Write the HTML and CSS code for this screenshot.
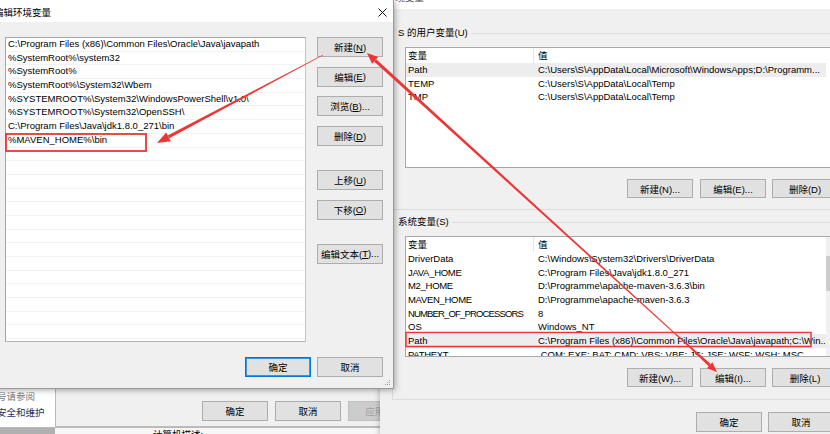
FILE: index.html
```html
<!DOCTYPE html>
<html lang="zh-CN">
<head>
<meta charset="utf-8">
<title>编辑环境变量</title>
<link rel="stylesheet" href="styles.css">
</head>
<body>
<div class="desktop">

  <div class="win cp">
    <div class="cp-links">
      <div class="cp-see">号请参阅</div>
      <div class="cp-link">安全和维护</div>
    </div>
    <div class="cp-bottom"><span class="cp-desc">计算机描述:</span></div>
  </div>

  <div class="win sysprops">
    <div class="sp-buttons">
      <div class="btn">确定</div>
      <div class="btn">取消</div>
      <div class="btn disabled">应用(A)</div>
    </div>
  </div>

  <div class="win envdlg">
    <div class="env-title">环境变量</div>
    <div class="env-body">
      <div class="grp grp-user">
        <div class="grp-head"><span class="grp-label">S 的用户变量(U)</span><span class="rule"></span></div>
        <div class="vlist">
          <div class="vrows">
            <div class="vhead"><span class="c1">变量</span><span class="c2">值</span></div>
            <div class="vrow sel"><span class="c1">Path</span><span class="c2">C:\Users\S\AppData\Local\Microsoft\WindowsApps;D:\Programm...</span></div>
            <div class="vrow"><span class="c1">TEMP</span><span class="c2">C:\Users\S\AppData\Local\Temp</span></div>
            <div class="vrow"><span class="c1">TMP</span><span class="c2">C:\Users\S\AppData\Local\Temp</span></div>
          </div>
        </div>
        <div class="btnrow">
          <div class="btn sm">新建(N)...</div>
          <div class="btn sm">编辑(E)...</div>
          <div class="btn sm">删除(D)</div>
        </div>
      </div>

      <div class="grp grp-sys">
        <div class="grp-head"><span class="grp-label">系统变量(S)</span><span class="rule"></span></div>
        <div class="vlist">
          <div class="vrows">
            <div class="vhead"><span class="c1">变量</span><span class="c2">值</span></div>
            <div class="vrow"><span class="c1">DriverData</span><span class="c2">C:\Windows\System32\Drivers\DriverData</span></div>
            <div class="vrow"><span class="c1 caps">JAVA_HOME</span><span class="c2">C:\Program Files\Java\jdk1.8.0_271</span></div>
            <div class="vrow"><span class="c1 caps">M2_HOME</span><span class="c2">D:\Programme\apache-maven-3.6.3\bin</span></div>
            <div class="vrow"><span class="c1 caps">MAVEN_HOME</span><span class="c2">D:\Programme\apache-maven-3.6.3</span></div>
            <div class="vrow"><span class="c1 cond">NUMBER_OF_PROCESSORS</span><span class="c2">8</span></div>
            <div class="vrow"><span class="c1">OS</span><span class="c2">Windows_NT</span></div>
            <div class="vrow sel"><span class="c1">Path</span><span class="c2">C:\Program Files (x86)\Common Files\Oracle\Java\javapath;C:\Win...</span></div>
            <div class="vrow"><span class="c1 caps">PATHEXT</span><span class="c2">.COM;.EXE;.BAT;.CMD;.VBS;.VBE;.JS;.JSE;.WSF;.WSH;.MSC</span></div>
          </div>
          <div class="vscroll"><div class="thumb"></div></div>
        </div>
        <div class="btnrow">
          <div class="btn sm">新建(W)...</div>
          <div class="btn sm">编辑(I)...</div>
          <div class="btn sm">删除(L)</div>
        </div>
      </div>

      <div class="env-foot">
        <div class="btn">确定</div>
        <div class="btn">取消</div>
      </div>
    </div>
  </div>

  <div class="win editdlg">
    <div class="ed-title">
      <span>编辑环境变量</span>
      <svg class="close" width="9" height="9" viewBox="0 0 9 9"><path d="M0.5 0.5 L8.5 8.5 M8.5 0.5 L0.5 8.5" stroke="#111" stroke-width="1" fill="none"/></svg>
    </div>
    <div class="ed-body">
      <div class="plist">
        <div class="prow">C:\Program Files (x86)\Common Files\Oracle\Java\javapath</div>
        <div class="prow">%SystemRoot%\system32</div>
        <div class="prow">%SystemRoot%</div>
        <div class="prow">%SystemRoot%\System32\Wbem</div>
        <div class="prow">%SYSTEMROOT%\System32\WindowsPowerShell\v1.0\</div>
        <div class="prow">%SYSTEMROOT%\System32\OpenSSH\</div>
        <div class="prow">C:\Program Files\Java\jdk1.8.0_271\bin</div>
        <div class="prow">%MAVEN_HOME%\bin</div>
        <div class="prow"></div><div class="prow"></div><div class="prow"></div><div class="prow"></div>
        <div class="prow"></div><div class="prow"></div><div class="prow"></div><div class="prow"></div>
        <div class="prow"></div><div class="prow"></div><div class="prow"></div><div class="prow"></div>
        <div class="prow"></div><div class="prow"></div>
      </div>
      <div class="side">
        <div class="btn">新建(<u>N</u>)</div>
        <div class="btn">编辑(<u>E</u>)</div>
        <div class="btn">浏览(<u>B</u>)...</div>
        <div class="btn">删除(<u>D</u>)</div>
        <div class="btn gap">上移(<u>U</u>)</div>
        <div class="btn">下移(<u>O</u>)</div>
        <div class="btn gap">编辑文本(<u>T</u>)...</div>
      </div>
      <div class="ed-foot">
        <div class="btn default">确定</div>
        <div class="btn">取消</div>
      </div>
    </div>
    <svg class="grip" width="7" height="7" viewBox="0 0 7 7">
      <rect x="5" y="1" width="1" height="1" fill="#999"/>
      <rect x="3" y="3" width="1" height="1" fill="#999"/><rect x="5" y="3" width="1" height="1" fill="#999"/>
      <rect x="1" y="5" width="1" height="1" fill="#999"/><rect x="3" y="5" width="1" height="1" fill="#999"/><rect x="5" y="5" width="1" height="1" fill="#999"/>
    </svg>
  </div>

  <svg class="annot" width="830" height="434" viewBox="0 0 830 434">
    <g fill="#ee3535">
      <polygon points="716.27,370.70 376.21,59.23 374.05,61.59 715.73,371.30"/>
      <polygon points="367,53 378.16,57.08 372.10,63.74"/>
      <polygon points="675.73,334.29 708.65,366.30 710.69,364.10 676.27,333.71"/>
      <polygon points="717,372 706.95,368.13 712.39,362.27"/>
      <polygon points="322.86,54.73 167.74,135.50 169.24,138.32 323.14,55.27"/>
      <polygon points="157,143 166.15,132.49 170.83,141.33"/>
    </g>
    <rect x="6" y="134" width="140" height="17" fill="none" stroke="#ee3535" stroke-width="1.8"/>
    <rect x="406" y="332.5" width="405" height="14" fill="none" stroke="#ee3535" stroke-width="1.5"/>
  </svg>
</div>
</body>
</html>
```

FILE: styles.css
```css
* { box-sizing: border-box; }

body {
  margin: 0;
  font-family: "Liberation Sans", "Noto Sans CJK SC", sans-serif;
  font-size: 9.5px;
  color: #000;
}

.desktop {
  position: relative;
  width: 830px;
  height: 434px;
  overflow: hidden;
  background: #fff;
}

.win { position: absolute; }

/* control panel in the far back */
.cp {
  left: 0; top: 0;
  width: 830px; height: 434px;
  background: #fff;
  display: flex;
  flex-direction: column;
}
.cp-links { padding-top: 389px; margin-left: -3px; line-height: 16px; }
.cp-see { color: #7a7a7a; }
.cp-link { color: #1f2d5c; }
.cp-bottom {
  margin-top: auto;
  height: 7px;
  border-top: 1px solid #b8b8b8;
  background: linear-gradient(to right, #b0b0b0 0 55px, #f7f7f7 55px);
  padding-left: 153px;
  line-height: 13px;
  overflow: hidden;
}

/* system properties dialog (behind) */
.sysprops {
  left: 55px; top: 0;
  width: 330px; height: 427px;
  background: #f0f0f0;
  border: 1px solid #bcbcbc;
  overflow: hidden;
  display: flex;
  flex-direction: column;
  justify-content: flex-end;
  padding: 0 0 5px 146px;
}
.sp-buttons { display: flex; gap: 7px; }

/* buttons */
.btn {
  flex: none;
  width: 66px;
  height: 20px;
  background: #e1e1e1;
  border: 1px solid #adadad;
  display: flex;
  align-items: center;
  justify-content: center;
  white-space: nowrap;
}
.btn.sm { height: 19px; }
.btn.disabled { background: #cccccc; border-color: #bfbfbf; color: #a0a0a0; }
.btn.default { border-color: #0078d7; box-shadow: inset 0 0 0 1px #3d95dd; }
.btn u { text-decoration-thickness: 1px; text-underline-offset: 1px; }

/* environment variables dialog */
.envdlg {
  left: 380px; top: -20px;
  width: 470px; height: 470px;
  background: #f0f0f0;
  box-shadow: 0 0 6px rgba(0,0,0,0.3);
}
.env-title {
  height: 29px;
  background: #fff;
  padding: 11px 0 0 6px;
  line-height: 14px;
  color: #555;
}
.env-body { padding-left: 12px; }

.grp {
  border-left: 1px solid #dcdcdc;
  border-bottom: 1px solid #dcdcdc;
}
.grp-user { margin-top: 18px; padding-bottom: 11px; }
.grp-sys { margin-top: 6px; padding-bottom: 12px; }
.grp-head { display: flex; align-items: center; height: 12px; }
.grp-label { padding: 0 3px 0 5px; line-height: 12px; white-space: nowrap; }
.rule { flex: 1; border-top: 1px solid #dcdcdc; }

.vlist {
  margin: 8px 0 0 12px;
  width: 440px;
  height: 121px;
  border: 1px solid #a8a8a8;
  background: #fff;
  overflow: hidden;
  display: flex;
}
.vrows { width: 420px; flex: none; }
.vhead, .vrow {
  display: grid;
  grid-template-columns: 128px 1fr;
  white-space: nowrap;
  overflow: hidden;
}
.vhead { height: 15px; line-height: 15px; }
.vhead .c1 { border-right: 1px solid #e5e5e5; }
.vrow { height: 13.7px; line-height: 13.7px; }
.vrow.sel { background: #ededed; }
.c1 { padding-left: 2px; overflow: hidden; }
.c2 { padding-left: 4px; overflow: hidden; }
.c1.caps { letter-spacing: -0.3px; }
.c1.cond { letter-spacing: -0.85px; }

.vscroll {
  width: 17px;
  flex: none;
  background: #f0f0f0;
  padding-top: 19px;
}
.vscroll .thumb { width: 100%; height: 35px; background: #cdcdcd; }

.btnrow { display: flex; gap: 7px; margin: 11px 0 0 234px; }
.btnrow .btn + .btn + .btn { margin-left: -1px; }

.env-foot {
  display: flex;
  gap: 6px;
  margin-top: 12px;
  padding-left: 304px;
}

/* edit environment variable dialog (front) */
.editdlg {
  left: -14px; top: 0;
  width: 408px; height: 389px;
  background: #f0f0f0;
  border-right: 1px solid #9a9a9a;
  border-bottom: 1px solid #9a9a9a;
  box-shadow: 1px 1px 6px rgba(0,0,0,0.35);
}
.ed-title {
  height: 22px;
  background: #fff;
  display: flex;
  align-items: center;
  justify-content: space-between;
  padding: 2px 6px 0 8px;
}
.close { display: block; }

.ed-body {
  display: grid;
  grid-template-columns: 301px 66px;
  grid-template-rows: 305px auto;
  column-gap: 11px;
  row-gap: 15px;
  padding: 15px 10px 11px 19px;
}
.plist {
  border: 1px solid #a5a5a5;
  border-right-color: #c4c4c4;
  border-bottom-color: #b4b4bc;
  background: #fff;
  overflow: hidden;
}
.prow {
  height: 13.7px;
  line-height: 12.7px;
  border-bottom: 1px solid #f2f2f2;
  padding-left: 2px;
  white-space: nowrap;
}

.side { display: flex; flex-direction: column; }
.side .btn + .btn { margin-top: 9.7px; }
.side .btn.gap { margin-top: 24px; }

.ed-foot {
  grid-column: 1 / -1;
  display: flex;
  justify-content: flex-end;
  gap: 6px;
}

.grip { position: absolute; right: 2px; bottom: 2px; }

/* red annotations drawn over the screenshot */
.annot {
  position: absolute;
  left: 0; top: 0;
  z-index: 10;
  pointer-events: none;
}
```
